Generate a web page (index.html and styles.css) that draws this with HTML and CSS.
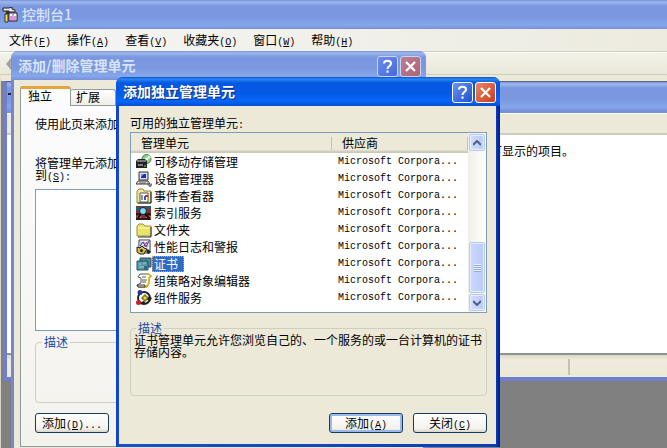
FILE: index.html
```html
<!DOCTYPE html>
<html lang="zh-CN">
<head>
<meta charset="utf-8">
<title>控制台1</title>
<link rel="stylesheet" href="styles.css">
</head>
<body>
<main class="console">
  <header class="titlebar titlebar-main">
    <svg class="icon" viewBox="0 0 16 16"><path d="M1 1h6l3-1v2l3 1v2H7V4H1z" fill="#e8e8e8" stroke="#222"/><path d="M4 4h3v3H4z" fill="#333"/><path d="M3 7h3v8H3z" fill="#f4e634" stroke="#333"/><path d="M7 6h8v8H7z" fill="#fff" stroke="#222"/><path d="M9 9v5M11 7v7M13 9v5" stroke="#c02ca0"/></svg>
    <h1>控制台1</h1>
  </header>
  <nav class="menu">
    <button>文件<span class="key">(<u>F</u>)</span></button>
    <button>操作<span class="key">(<u>A</u>)</span></button>
    <button>查看<span class="key">(<u>V</u>)</span></button>
    <button>收藏夹<span class="key">(<u>O</u>)</span></button>
    <button>窗口<span class="key">(<u>W</u>)</span></button>
    <button>帮助<span class="key">(<u>H</u>)</span></button>
  </nav>
  <div class="toolbar"><svg class="back" viewBox="0 0 5 12"><path d="M5 0v12L0 6z" fill="#a3a29b"/></svg></div>
  <section class="workspace">
    <div class="child">
      <header class="titlebar titlebar-child"><svg class="icon-small" viewBox="0 0 5 8"><path d="M0 4h5M4 2v4" stroke="#222" stroke-width="2"/></svg></header>
      <div class="child-bar"></div>
      <div class="child-view"><p>可显示的项目。</p></div>
      <footer class="status"><span></span></footer>
    </div>
  </section>
</main>

<section class="window snapins">
  <header class="titlebar">
    <h2>添加/删除管理单元</h2>
    <button class="cap help" aria-label="帮助"><svg viewBox="0 0 19 19"><path d="M6 6.500C6 2.800 13 2.800 13 6.500C13 9 9.500 9 9.500 12M9.500 13.500v2.200" fill="none" stroke="#fff" stroke-width="2"/></svg></button>
    <button class="cap close" aria-label="关闭"><svg viewBox="0 0 19 19"><path d="M5 5l9 9M14 5l-9 9" stroke="#fff" stroke-width="2.2"/></svg></button>
  </header>
  <div class="window-body">
    <div class="tabs">
      <button class="tab active">独立</button>
      <button class="tab">扩展</button>
    </div>
    <div class="panel">
      <p class="intro">使用此页来添加</p>
      <label class="add-to" for="target">将管理单元添加<br>到<span class="key">(<u>S</u>):</span></label>
      <select id="target" class="target" size="2"></select>
      <fieldset class="group"><legend>描述</legend></fieldset>
      <button class="push add-more">添加<span class="key">(<u>D</u>)...</span></button>
    </div>
  </div>
</section>

<section class="window standalone">
  <header class="titlebar">
    <h2>添加独立管理单元</h2>
    <button class="cap help" aria-label="帮助"><svg viewBox="0 0 19 19"><path d="M6 6.500C6 2.800 13 2.800 13 6.500C13 9 9.500 9 9.500 12M9.500 13.500v2.200" fill="none" stroke="#fff" stroke-width="2"/></svg></button>
    <button class="cap close" aria-label="关闭"><svg viewBox="0 0 19 19"><path d="M5 5l9 9M14 5l-9 9" stroke="#fff" stroke-width="2.2"/></svg></button>
  </header>
  <div class="window-body">
    <p class="caption">可用的独立管理单元<span class="key">:</span></p>
    <div class="list">
      <table>
        <thead><tr><th class="name">管理单元</th><th>供应商</th></tr></thead>
        <tbody>
          <tr><td><div class="item"><svg class="icon" viewBox="0 0 16 16"><circle cx="10.500" cy="5" r="4.500" fill="#8bd08b" stroke="#3d8048"/><path d="M10 5l3-4 2 3z" fill="#e4f8d8"/><circle cx="10.500" cy="5" r="1.500" fill="#fff"/><path d="M0 7l2-2h7l2 2v7H0z" fill="#222"/><path d="M1 7h9" stroke="#ccc"/><path d="M2 11h5" stroke="#ddd"/><path d="M8 12h2" stroke="#4f4"/></svg><span>可移动存储管理</span></div></td><td class="vendor">Microsoft Corpora...</td></tr>
          <tr><td><div class="item"><svg class="icon" viewBox="0 0 16 16"><path d="M3 1h9v8H3z" fill="#ddd" stroke="#333"/><path d="M5 3h5v4H5z" fill="#0d31d0"/><path d="M5 3h3L5 6z" fill="#6d9bff"/><path d="M2 10h10l2 3H0z" fill="#eee" stroke="#333"/><path d="M3 12h7" stroke="#555"/><path d="M11 12l3 3 2-2" fill="none" stroke="#777" stroke-width="2"/></svg><span>设备管理器</span></div></td><td class="vendor">Microsoft Corpora...</td></tr>
          <tr><td><div class="item"><svg class="icon" viewBox="0 0 16 16"><path d="M1 3l2-2h4l1 2h7v12H1z" fill="#eeeb96" stroke="#8c8740"/><path d="M15 4v11H2" fill="none" stroke="#222"/><path d="M4 5h8v9H4z" fill="#fff" stroke="#555"/><path d="M6 7v5" stroke="#222"/><path d="M8 8h2v4H8z" fill="#4051c8"/><path d="M9 7h3v2H9z" fill="#d52e3a"/></svg><span>事件查看器</span></div></td><td class="vendor">Microsoft Corpora...</td></tr>
          <tr><td><div class="item"><svg class="icon" viewBox="0 0 16 16"><path d="M0 1h15v14H0z" fill="#8a3028"/><path d="M0 2h5v4H0zM9 1h6v3H9z" fill="#235c78"/><path d="M1 11h4v3H1zM10 11h5v3h-5z" fill="#da6b44"/><path d="M0 9h5M10 9h5M0 14h14" stroke="#231c28" stroke-width="2"/><circle cx="7" cy="6" r="3.500" fill="#86d9f0" stroke="#123"/><path d="M9 9l5 5M5 9l-3 4" stroke="#101018" stroke-width="2"/></svg><span>索引服务</span></div></td><td class="vendor">Microsoft Corpora...</td></tr>
          <tr><td><div class="item"><svg class="icon" viewBox="0 0 16 16"><path d="M1 4l2-2h4l2 2h6v10H1z" fill="#e9e36a" stroke="#99933a"/><path d="M2 6h12" stroke="#fffdc6"/><path d="M15 5v10H2" fill="none" stroke="#333"/></svg><span>文件夹</span></div></td><td class="vendor">Microsoft Corpora...</td></tr>
          <tr><td><div class="item"><svg class="icon" viewBox="0 0 16 16"><path d="M3 1h11v13H3z" fill="#fff" stroke="#333"/><path d="M5 1v9M8 1v9M11 1v9M3 4h10M3 7h10" stroke="#b3b3c5"/><path d="M4 7l3-4 3 5 3-6" fill="none" stroke="#243bc6"/><path d="M8 7l3-4" stroke="#d42132"/><path d="M1 8l3 1 2-2 2 2 3 1-2 3-1 2H4l-3-2z" fill="#d8c43c" stroke="#222"/><circle cx="5.500" cy="11.500" r="1.500" fill="#222"/><path d="M10 12l2-2 3 3-3 2z" fill="#222"/></svg><span>性能日志和警报</span></div></td><td class="vendor">Microsoft Corpora...</td></tr>
          <tr class="selected"><td><div class="item"><svg class="icon" viewBox="0 0 16 16"><path d="M4 2h11v9H4z" fill="#4b8b9d" stroke="#234f68"/><path d="M1 5h11v9H1z" fill="#5799a5" stroke="#214f68"/><path d="M3 8h2M7 7h3M3 11h5" stroke="#91d1ce"/><path d="M8 10h3v4H8z" fill="#30687d"/></svg><span>证书</span></div></td><td class="vendor">Microsoft Corpora...</td></tr>
          <tr><td><div class="item"><svg class="icon" viewBox="0 0 16 16"><path d="M4 1h9l2 2-2 2v5l-2 4H2l-1-2 4-2V5L2 4z" fill="#fff" stroke="#555"/><path d="M12 1l3 2-2 2v5l-3 4H4" fill="none" stroke="#d8b926" stroke-width="2"/><path d="M6 4h4M6 7h5M6 9h4" stroke="#555"/><path d="M1 12h8v2H2z" fill="#eee" stroke="#333"/></svg><span>组策略对象编辑器</span></div></td><td class="vendor">Microsoft Corpora...</td></tr>
          <tr><td><div class="item"><svg class="icon" viewBox="0 0 16 16"><circle cx="8" cy="8" r="6" fill="#fff" stroke="#222" stroke-width="2"/><circle cx="4" cy="2.500" r="2.500" fill="#253894"/><circle cx="2.500" cy="12.500" r="2.500" fill="#c52427"/><path d="M8 5h2v2h2v2h-2v2H8V9H6V7h2z" fill="#f6da30" stroke="#665819"/><path d="M13 6l3 2-2 3-3-1z" fill="#222"/><path d="M5 12l3-1 2 3H6z" fill="#222"/></svg><span>组件服务</span></div></td><td class="vendor">Microsoft Corpora...</td></tr>
        </tbody>
      </table>
      <div class="scroll">
        <button class="arrow" aria-label="向上"><svg viewBox="0 0 8 6"><path d="M0 5l4-4 4 4" fill="none" stroke="#4d6185" stroke-width="2"/></svg></button>
        <div class="track"><div class="thumb"></div></div>
        <button class="arrow" aria-label="向下"><svg viewBox="0 0 8 6"><path d="M0 1l4 4 4-4" fill="none" stroke="#4d6185" stroke-width="2"/></svg></button>
      </div>
    </div>
    <fieldset class="group"><legend>描述</legend><p>证书管理单元允许您浏览自己的、一个服务的或一台计算机的证书存储内容。</p></fieldset>
    <div class="actions">
      <button class="push default">添加<span class="key">(<u>A</u>)</span></button>
      <button class="push">关闭<span class="key">(<u>C</u>)</span></button>
    </div>
  </div>
</section>
</body>
</html>
```
FILE: styles.css
```css
* { box-sizing: border-box; }
html, body { height: 100%; }
body {
  margin: 0;
  position: relative;
  overflow: hidden;
  background: #808080;
  color: #000;
  font: 12px/12px "Noto Sans CJK SC", sans-serif;
}
h1, h2, p { margin: 0; }
button { font: inherit; color: inherit; padding: 0; border: 0; background: none; }
.key, .vendor { font-family: "Liberation Mono", monospace; font-size: 10px; }
.key { line-height: 0; }
.icon { width: 16px; height: 16px; flex: none; }

/* Console window */
.console { display: flex; flex-direction: column; height: 100%; }
.titlebar {
  display: flex;
  align-items: center;
  flex: none;
  height: 29px;
  background: linear-gradient(#7a92d6 0, #9db8ee 2px, #7b97e0 6px, #7a97e0 17px, #85a7ea 25px, #7890da 29px);
  color: #d8e4f8;
}
.titlebar h1, .titlebar h2 { flex: 1; padding-bottom: 3px; font-size: 14px; line-height: 18px; font-weight: 700; }
.titlebar-main { padding: 1px 2px 0; gap: 4px; }
.titlebar-main h1 { font-weight: 500; }
.menu {
  display: flex;
  flex: none;
  gap: 16px;
  height: 23px;
  padding: 0 9px;
  background: linear-gradient(90deg, #f5f5f5, #edebdf);
  border-bottom: 1px solid #d0cebf;
}
.toolbar {
  display: flex;
  align-items: center;
  flex: none;
  height: 23px;
  padding-left: 6px;
  background: linear-gradient(#f3f2e8, #eae8da);
  border-top: 1px solid #fff;
  border-bottom: 1px solid #cfcdbd;
}
.back { width: 5px; height: 12px; }
.workspace {
  flex: 1;
  padding-left: 2px;
  border-top: 6px solid #ece9d8;
  background: #808080;
  border-left: 1px solid #d8d5c8;
}
.child {
  height: 300px;
  display: flex;
  flex-direction: column;
  border: solid #6f7fce;
  border-width: 1px 0 4px 4px;
  border-top-color: #5a6488;
  background: #ece9d8;
}
.titlebar-child { height: 32px; padding-left: 1px; border-bottom: 1px solid #fff; }
.icon-small { width: 5px; height: 8px; margin-bottom: 8px; }
.child-bar { height: 21px; background: #ece9d8; border-bottom: 2px solid #cfccba; }
.child-view { flex: 1; background: #fff; border-bottom: 2px solid #8b9490; }
.child-view p { padding: 10px 0 0 483px; }
.status {
  height: 22px;
  padding: 4px 0 2px;
  background: linear-gradient(#dcd8c4, #efecde 5px, #ece9d8);
}
.status span { display: block; width: 563px; height: 16px; border-right: 2px solid #c4c1ae; }

/* Dialog windows */
.window {
  position: absolute;
  display: flex;
  flex-direction: column;
  border-radius: 7px 7px 0 0;
  overflow: hidden;
}
.window-body { flex: 1; display: flex; flex-direction: column; background: #ece9d8; }
.cap {
  display: grid;
  place-items: center;
  width: 21px;
  height: 21px;
  border: 1px solid #fff;
  border-radius: 3px;
}
.cap svg { width: 19px; height: 19px; }
.snapins { left: 11px; top: 51px; bottom: -4px; width: 415px; background: #7986cc; padding: 0 3px 3px; }
.snapins .titlebar { margin: 0 -3px; padding: 2px 5px 0 7px; gap: 2px; }
.snapins .cap { border-color: #c9d4f4; }
.snapins .help { background: linear-gradient(135deg, #6e8ee8, #4569df); }
.snapins .close { background: linear-gradient(135deg, #bb7e94, #b0646f); }
.snapins .window-body { padding: 6px 6px 2px; }

.tabs { display: flex; align-items: flex-end; height: 19px; }
.tab {
  width: 45px;
  height: 16px;
  border: 1px solid #919b9c;
  border-width: 1px 1px 0 0;
  border-radius: 2px 3px 0 0;
  background: linear-gradient(#fff, #efeee6);
  padding: 0 10px 2px 0;
}
.tab.active {
  z-index: 1;
  width: 51px;
  height: 20px;
  margin-bottom: -1px;
  border-width: 0 1px;
  border-top: 3px solid #e8a33a;
  background: #fcfcfe;
  padding: 0 11px 4px 0;
}
.panel {
  flex: 1;
  display: flex;
  flex-direction: column;
  padding: 12px 14px;
  border: 1px solid #919b9c;
  background: linear-gradient(#fcfcfe, #f3f2ec);
}
.intro { margin-bottom: 27px; }
.add-to { margin-bottom: 8px; }
.target { height: 142px; border: 1px solid #7f9db9; border-radius: 0; background: #fff; padding: 0; overflow: hidden; }
.group {
  min-width: 0;
  margin: 0;
  padding: 0 3px;
  border: 1px solid #cfcfbd;
  border-radius: 4px;
}
.group legend { margin-left: 3px; padding: 0 2px; color: #1748a5; line-height: 12px; }
.snapins .group { height: 67px; margin-top: 5px; }
.push {
  width: 74px;
  height: 20px;
  border: 1px solid #123c5e;
  border-radius: 3px;
  background: linear-gradient(#fff, #f3f2ed 80%, #d9d5c8);
}
.push.default { box-shadow: inset 0 0 0 2px #9db9ea; }
.add-more { margin-top: 10px; }

.standalone { left: 116px; top: 77px; width: 384px; background: linear-gradient(90deg, #0a40c8, #1650d0 3px, #0d3cb8 380px, #001c90); padding: 0 4px 3px 3px; }
.standalone .titlebar {
  margin: 0 -4px 0 -3px;
  padding: 2px 4px 0 7px;
  gap: 2px;
  color: #fff;
  text-shadow: 1px 1px 0 #0a2c84;
  background: linear-gradient(#0a4fc4 0, #2a86f4 2px, #0458e0 6px, #0459e6 16px, #0566fb 24px, #0450d0 29px);
}
.standalone .help { background: linear-gradient(135deg, #6a94f2, #2050d0); }
.standalone .close { background: linear-gradient(135deg, #e8866a, #cc3c16); }
.standalone .window-body { padding: 11px 9px 11px 11px; }
.caption { margin-bottom: 3px; }
.list { display: flex; height: 181px; border: 1px solid #7f9db9; background: #fff; }
table { flex: 1; height: max-content; border-collapse: collapse; table-layout: fixed; }
th {
  height: 20px;
  padding: 0 0 0 10px;
  text-align: left;
  font-weight: 400;
  background:
    linear-gradient(#c5c2b0, #c5c2b0) right center / 1px 13px no-repeat,
    linear-gradient(#ece9d8 17px, #d4d1c0 18px, #c8c5b3);
}
.name { width: 201px; }
td { height: 17px; padding: 0; }
.vendor { padding-left: 6px; white-space: nowrap; }
.item { display: flex; align-items: center; padding-left: 5px; height: 17px; }
.item span { padding: 0 6px 0 2px; line-height: 16px; }
.selected .item span { background: #316ac5; color: #fff; outline: 1px dotted #d8a060; outline-offset: -1px; }
.scroll { display: flex; flex-direction: column; width: 18px; padding: 1px; background: linear-gradient(90deg, #f1efe8, #fefefb); }
.arrow, .thumb {
  width: 16px;
  border: 1px solid #b4c8f4;
  border-radius: 2px;
  background: linear-gradient(90deg, #d2defd, #b8cbf6);
  box-shadow: inset 0 0 0 1px #e8effe;
}
.arrow { display: grid; place-items: center; height: 17px; }
.arrow svg { width: 8px; height: 6px; }
.track { flex: 1; display: flex; flex-direction: column; justify-content: flex-end; padding-bottom: 1px; }
.thumb {
  height: 51px;
  background:
    repeating-linear-gradient(#eef4fe 0 1px, #8fa9e4 1px 2px) center / 7px 8px no-repeat,
    linear-gradient(90deg, #cad8fd, #b9cbf8);
}
.standalone .group { height: 74px; margin-top: 9px; }
.standalone .group legend { margin-left: 2px; }
.actions { display: flex; justify-content: flex-end; gap: 10px; margin-top: 17px; }
```
